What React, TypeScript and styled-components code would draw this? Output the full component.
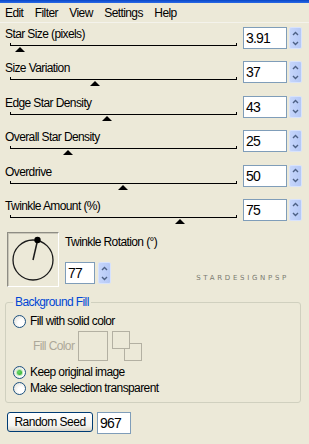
import React from "react";
import styled, { createGlobalStyle } from "styled-components";

const Global = createGlobalStyle`
  html, body { margin: 0; padding: 0; background: #ECE9D8; }
  body {
    font-family: "Liberation Sans", Arial, sans-serif;
    font-size: 12px;
    letter-spacing: -0.6px;
    color: #000;
  }
  * { box-sizing: border-box; }
`;

const Window = styled.div`
  width: 309px;
  height: 444px;
  background: #ECE9D8;
  overflow: hidden;
  display: flex;
  flex-direction: column;
`;

const TitleStrip = styled.div`
  height: 3px;
  background: linear-gradient(#0846C8, #2A6AE6);
`;

const MenuBar = styled.nav`
  display: flex;
  align-items: center;
  height: 20px;
  padding-left: 5px;
  gap: 11.5px;
  border-bottom: 1px solid #F4F3EC;
`;

const MenuItem = styled.span`
  line-height: 20px;
`;

const SliderList = styled.div`
  display: flex;
  flex-direction: column;
  padding-top: 4px;
`;

const SliderRowBox = styled.div`
  display: flex;
  height: 34.4px;
  padding-left: 5px;
`;

const SliderLeft = styled.div`
  width: 232px;
  display: flex;
  flex-direction: column;
`;

const Label = styled.div`
  height: 14px;
  line-height: 14px;
  white-space: nowrap;
`;

const Track = styled.div`
  position: relative;
  margin-left: 5px;
  width: 227px;
  height: 12px;
  &::before {
    content: "";
    position: absolute;
    left: 0;
    right: 0;
    top: 4px;
    height: 1px;
    background: #000;
  }
  &::after {
    content: "";
    position: absolute;
    left: 0;
    right: 0;
    top: 2px;
    height: 2px;
    border-left: 1px solid #000;
    border-right: 1px solid #000;
  }
`;

const Thumb = styled.div`
  position: absolute;
  top: 6px;
  width: 0;
  height: 0;
  margin-left: -5.5px;
  border-left: 5.5px solid transparent;
  border-right: 5.5px solid transparent;
  border-bottom: 5px solid #000;
`;

const NumInput = styled.div<{ $w: number }>`
  width: ${(p) => p.$w}px;
  height: 22px;
  background: #fff;
  border: 1px solid #7F9DB9;
  padding-left: 2px;
  font-size: 14px;
  letter-spacing: -0.8px;
  line-height: 20px;
  white-space: nowrap;
`;

const InputWrap = styled.div`
  display: flex;
  gap: 2px;
  margin-left: 6px;
`;

const SpinBox = styled.div`
  width: 13px;
  height: 22px;
  display: flex;
  flex-direction: column;
  background: linear-gradient(90deg, #C6D6FB, #B4C8F6);
  border: 1px solid #D8E3FC;
  border-radius: 2px;
`;

const SpinHalf = styled.div`
  flex: 1;
  display: flex;
  align-items: center;
  justify-content: center;
`;

function Spin() {
  return (
    <SpinBox>
      <SpinHalf>
        <svg width="7" height="5" viewBox="0 0 7 5">
          <path d="M1 4 L3.5 1.5 L6 4" fill="none" stroke="#4D6185" strokeWidth="1.4" />
        </svg>
      </SpinHalf>
      <SpinHalf>
        <svg width="7" height="5" viewBox="0 0 7 5">
          <path d="M1 1 L3.5 3.5 L6 1" fill="none" stroke="#4D6185" strokeWidth="1.4" />
        </svg>
      </SpinHalf>
    </SpinBox>
  );
}

const sliders = [
  { label: "Star Size (pixels)", value: "3.91", pos: 10 },
  { label: "Size Variation", value: "37", pos: 85 },
  { label: "Edge Star Density", value: "43", pos: 97 },
  { label: "Overall Star Density", value: "25", pos: 58 },
  { label: "Overdrive", value: "50", pos: 113 },
  { label: "Twinkle Amount (%)", value: "75", pos: 170 },
];

const RotationSection = styled.div`
  display: flex;
  padding-left: 7px;
  margin-top: -1px;
  height: 55px;
`;

const DialBox = styled.div`
  width: 52px;
  height: 55px;
  border-top: 1px solid #8E8D84;
  border-left: 1px solid #8E8D84;
  border-right: 1px solid #fff;
  border-bottom: 1px solid #fff;
  box-shadow: inset 1px 1px 0 #C9C6B8;
`;

const RotationControls = styled.div`
  display: flex;
  flex-direction: column;
  margin-left: 6px;
  padding-top: 3px;
`;

const SpinRow = styled.div`
  display: flex;
  gap: 3px;
  margin-top: 13px;
`;

const Brand = styled.div`
  align-self: flex-end;
  margin-left: auto;
  margin-right: 20px;
  margin-bottom: 5px;
  font-family: "DejaVu Sans", sans-serif;
  font-size: 7px;
  letter-spacing: 2.7px;
  color: #7A7A70;
  line-height: 8px;
`;

const Group = styled.fieldset`
  margin: 8px 8px 0 5px;
  padding: 0 0 7px 0;
  border: 1px solid #D0D0BF;
  border-radius: 3px;
  min-width: 0;
`;

const Legend = styled.legend`
  margin-left: 7px;
  padding: 0 2px;
  color: #0046D5;
  line-height: 14px;
`;

const RadioRow = styled.label<{ $mt: number }>`
  display: flex;
  align-items: center;
  gap: 4px;
  height: 14px;
  padding-left: 7px;
  margin-top: ${(p) => p.$mt}px;
`;

const RadioCircle = styled.span<{ $checked?: boolean }>`
  width: 13px;
  height: 13px;
  border-radius: 50%;
  border: 1px solid #1C5180;
  background: radial-gradient(circle at 65% 65%, #FFFFFF 30%, #DCDAD0 100%);
  display: flex;
  align-items: center;
  justify-content: center;
  &::after {
    content: "";
    display: ${(p) => (p.$checked ? "block" : "none")};
    width: 5px;
    height: 5px;
    border-radius: 50%;
    background: radial-gradient(circle at 40% 40%, #6BDB6B, #21A121);
    box-shadow: 0 0 1px 1px #B9E7B0;
  }
`;

const FillRow = styled.div`
  display: flex;
  align-items: center;
  padding-left: 27px;
  margin-top: 3px;
  height: 30px;
`;

const DisabledLabel = styled.span`
  color: #ACA899;
  white-space: nowrap;
  width: 45px;
`;

const Swatch = styled.div`
  width: 30px;
  height: 30px;
  border: 1px solid #B3B0A2;
`;

const SwapStack = styled.div`
  position: relative;
  width: 30px;
  height: 30px;
  margin-left: 4px;
`;

const SmallSquare = styled.div<{ $off: number }>`
  position: absolute;
  left: ${(p) => p.$off}px;
  top: ${(p) => p.$off}px;
  width: 18px;
  height: 18px;
  border: 1px solid #B3B0A2;
  background: #ECE9D8;
`;

const SeedRow = styled.div`
  display: flex;
  gap: 4px;
  padding-left: 7px;
  margin-top: 9px;
`;

const Button = styled.button`
  width: 86px;
  height: 20px;
  border: 1px solid #003C74;
  border-radius: 3px;
  background: linear-gradient(#FFFFFF, #F3F3EF 70%, #D8D4C8);
  font-family: inherit;
  font-size: 12px;
  letter-spacing: -0.5px;
  padding: 0;
  color: #000;
`;

export default function App() {
  return (
    <Window>
      <Global />
      <TitleStrip />
      <MenuBar>
        {["Edit", "Filter", "View", "Settings", "Help"].map((m) => (
          <MenuItem key={m}>{m}</MenuItem>
        ))}
      </MenuBar>
      <SliderList>
        {sliders.map((s) => (
          <SliderRowBox key={s.label}>
            <SliderLeft>
              <Label>{s.label}</Label>
              <Track>
                <Thumb style={{ left: s.pos }} />
              </Track>
            </SliderLeft>
            <InputWrap>
              <NumInput $w={44}>{s.value}</NumInput>
              <Spin />
            </InputWrap>
          </SliderRowBox>
        ))}
      </SliderList>
      <RotationSection>
        <DialBox>
          <svg width="50" height="53" viewBox="0 0 50 53">
            <circle cx="25" cy="27" r="20" fill="none" stroke="#1a1a1a" strokeWidth="1.3" />
            <line x1="25" y1="27" x2="29.5" y2="7.5" stroke="#1a1a1a" strokeWidth="1.5" />
            <circle cx="29.5" cy="7" r="3.2" fill="#000" />
          </svg>
        </DialBox>
        <RotationControls>
          <Label>Twinkle Rotation (°)</Label>
          <SpinRow>
            <NumInput $w={30}>77</NumInput>
            <Spin />
          </SpinRow>
        </RotationControls>
        <Brand>STARDESIGNPSP</Brand>
      </RotationSection>
      <Group>
        <Legend>Background Fill</Legend>
        <RadioRow $mt={5}>
          <RadioCircle />
          <span>Fill with solid color</span>
        </RadioRow>
        <FillRow>
          <DisabledLabel>Fill Color</DisabledLabel>
          <Swatch />
          <SwapStack>
            <SmallSquare $off={12} />
            <SmallSquare $off={0} />
          </SwapStack>
        </FillRow>
        <RadioRow $mt={4}>
          <RadioCircle $checked />
          <span>Keep original image</span>
        </RadioRow>
        <RadioRow $mt={2}>
          <RadioCircle />
          <span>Make selection transparent</span>
        </RadioRow>
      </Group>
      <SeedRow>
        <Button>Random Seed</Button>
        <NumInput $w={34}>967</NumInput>
      </SeedRow>
    </Window>
  );
}
